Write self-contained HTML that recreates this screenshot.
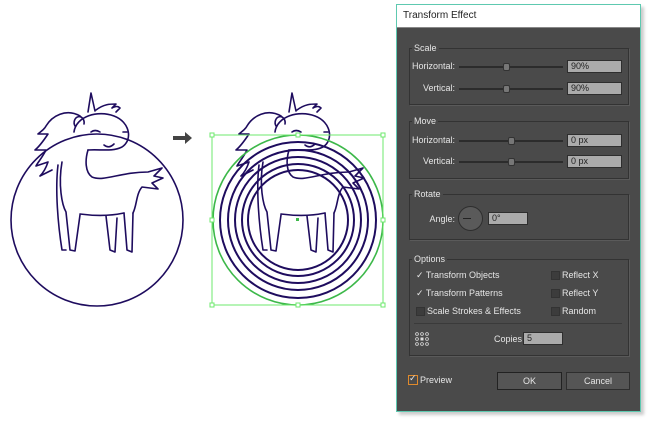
<!DOCTYPE html>
<html><head><meta charset="utf-8"><style>
body{margin:0;width:650px;height:429px;background:#fff;position:relative;overflow:hidden;font-family:"Liberation Sans",sans-serif;}
.a{position:absolute}
.dlg{left:396px;top:4px;width:243px;height:406px;border:1px solid #5ec9b0;background:#4a4a4a;box-shadow:3px 3px 3px #ccc}
.title{left:0;top:0;width:243px;height:22px;background:#fff;border-bottom:1px solid #888;font-size:10px;color:#222;line-height:22px;text-indent:6px}
.box{border:1px solid #333;box-shadow:1px 1px 0 #5a5a5a}
.lbl{font-size:9px;color:#e6e6e6;background:#4a4a4a;padding:0 2px}
.t{font-size:9px;color:#e6e6e6;white-space:nowrap}
.inp{background:#ababab;border:1px solid #2e2e2e;font-size:9px;color:#222;line-height:11px;text-indent:3px;height:11px}
.sl{height:2px;background:#2c2c2c}
.th{width:5px;height:6px;background:#777;border-radius:2px;border:1px solid #333}
.cb{width:7px;height:7px;background:#3c3c3c;border:1px solid #333}
.btn{background:#555;border:1px solid #2e2e2e;font-size:9px;color:#e6e6e6;text-align:center;line-height:16px;height:16px}
</style></head><body>
<svg class="a" style="left:0;top:0" width="400" height="429">
<defs><g id="u" fill="none" stroke="#1e0c5e" stroke-width="1.6" stroke-linecap="round" stroke-linejoin="round">
<path d="M88,112 L91,93 L95,111"/>
<path d="M74,132 C76,116 98,110 114,116 C130,122 133,140 122,147 C112,152 100,149 88,150"/>
<path d="M75,126 a5,6 0 1 1 9,-2"/>
<path d="M104,145 q5,4 10,-1"/><path d="M91,132 q4,-3 9,0"/><path d="M123,132 h4"/>
<path d="M80,116 C66,108 52,116 46,126 C44,130 40,132 38,134 L48,134 C44,140 40,146 35,150 L46,150 C42,158 38,162 36,166 L48,162 C46,168 44,172 40,176 L52,170"/>
<path d="M96,110 C104,104 110,104 116,104 L112,108 C116,106 118,106 120,108 L116,112"/>
<path d="M88,150 C85,160 85,172 92,177 C104,182 120,172 148,172 L162,168 L154,176 L163,178 L152,183 L158,189 L142,187 C136,194 137,205 133,213"/>
<path d="M62,162 C58,185 62,205 66,212 L70,250 L75,251 L80,215"/>
<path d="M80,214 C95,216 110,216 124,213"/>
<path d="M106,216 L110,250 L115,252 L117,218"/>
<path d="M124,213 L127,250 L132,252 L133,213"/>
<path d="M58,165 C55,190 58,225 62,250 L66,250"/>
</g></defs>
<use href="#u"/>
<circle cx="97" cy="220" r="86" fill="none" stroke="#1e0c5e" stroke-width="1.6"/>
<path d="M173,138 h14" stroke="#444" stroke-width="4"/><path d="M185,132 l7,6 l-7,6z" fill="#444"/>
<g transform="translate(201,0)"><use href="#u"/></g>
<g fill="none" stroke="#1e0c5e" stroke-width="2">
<circle cx="298" cy="220" r="85" stroke="#3db84a" stroke-width="1.6"/>
<circle cx="298" cy="220" r="78"/><circle cx="298" cy="220" r="70"/><circle cx="298" cy="220" r="63"/><circle cx="298" cy="220" r="56"/><circle cx="298" cy="220" r="50"/>
</g>
<rect x="212" y="135" width="171" height="170" fill="none" stroke="#6de86d" stroke-width="1"/>
<g fill="#fff" stroke="#6de86d"><rect x="210" y="133" width="4" height="4"/><rect x="296" y="133" width="4" height="4"/><rect x="381" y="133" width="4" height="4"/><rect x="210" y="218" width="4" height="4"/><rect x="381" y="218" width="4" height="4"/><rect x="210" y="303" width="4" height="4"/><rect x="296" y="303" width="4" height="4"/><rect x="381" y="303" width="4" height="4"/></g>
<rect x="296" y="218" width="3" height="3" fill="#3db84a"/>
</svg>
<div class="a dlg">
<div class="a title">Transform Effect</div>
<div class="a box" style="left:12px;top:43px;width:218px;height:55px"></div><div class="a lbl" style="left:15px;top:38px">Scale</div>
<div class="a t" style="left:0;width:58px;text-align:right;top:56px">Horizontal:</div><div class="a sl" style="left:62px;top:61px;width:104px"></div><div class="a th" style="left:106px;top:58px"></div><div class="a inp" style="left:170px;top:55px;width:53px">90%</div>
<div class="a t" style="left:0;width:58px;text-align:right;top:78px">Vertical:</div><div class="a sl" style="left:62px;top:83px;width:104px"></div><div class="a th" style="left:106px;top:80px"></div><div class="a inp" style="left:170px;top:77px;width:53px">90%</div>
<div class="a box" style="left:12px;top:116px;width:218px;height:56px"></div><div class="a lbl" style="left:15px;top:111px">Move</div>
<div class="a t" style="left:0;width:58px;text-align:right;top:130px">Horizontal:</div><div class="a sl" style="left:62px;top:135px;width:104px"></div><div class="a th" style="left:111px;top:132px"></div><div class="a inp" style="left:170px;top:129px;width:53px">0 px</div>
<div class="a t" style="left:0;width:58px;text-align:right;top:151px">Vertical:</div><div class="a sl" style="left:62px;top:156px;width:104px"></div><div class="a th" style="left:111px;top:153px"></div><div class="a inp" style="left:170px;top:150px;width:53px">0 px</div>
<div class="a box" style="left:12px;top:189px;width:218px;height:44px"></div><div class="a lbl" style="left:15px;top:184px">Rotate</div>
<div class="a t" style="left:0;width:58px;text-align:right;top:209px">Angle:</div>
<div class="a" style="left:61px;top:201px;width:23px;height:23px;border-radius:50%;background:#5a5a5a;border:1px solid #2e2e2e"></div><div class="a" style="left:66px;top:213px;width:8px;height:1px;background:#222"></div>
<div class="a inp" style="left:91px;top:207px;width:38px">0°</div>
<div class="a box" style="left:12px;top:254px;width:218px;height:95px"></div><div class="a lbl" style="left:15px;top:249px">Options</div>
<div class="a t" style="left:19px;top:265px">✓ Transform Objects</div>
<div class="a t" style="left:19px;top:283px">✓ Transform Patterns</div>
<div class="a cb" style="left:19px;top:302px"></div><div class="a t" style="left:30px;top:301px">Scale Strokes &amp; Effects</div>
<div class="a cb" style="left:154px;top:266px"></div><div class="a t" style="left:165px;top:265px">Reflect X</div>
<div class="a cb" style="left:154px;top:284px"></div><div class="a t" style="left:165px;top:283px">Reflect Y</div>
<div class="a cb" style="left:154px;top:302px"></div><div class="a t" style="left:165px;top:301px">Random</div>
<div class="a" style="left:17px;top:318px;width:208px;height:1px;background:#3a3a3a"></div>
<svg class="a" style="left:18px;top:327px" width="14" height="14"><g fill="none" stroke="#ddd" stroke-width="0.8"><circle cx="2" cy="2" r="1.4"/><circle cx="7" cy="2" r="1.4"/><circle cx="12" cy="2" r="1.4"/><circle cx="2" cy="7" r="1.4"/><circle cx="12" cy="7" r="1.4"/><circle cx="2" cy="12" r="1.4"/><circle cx="7" cy="12" r="1.4"/><circle cx="12" cy="12" r="1.4"/></g><rect x="5.5" y="5.5" width="3" height="3" fill="#ddd"/></svg>
<div class="a t" style="left:97px;top:329px">Copies</div><div class="a inp" style="left:126px;top:327px;width:38px">5</div>
<div class="a" style="left:11px;top:370px;width:8px;height:8px;border:1px solid #e08a2c"></div><div class="a t" style="left:12px;top:368px">✓</div><div class="a t" style="left:23px;top:370px">Preview</div>
<div class="a btn" style="left:100px;top:367px;width:63px;border-color:#222">OK</div>
<div class="a btn" style="left:169px;top:367px;width:62px">Cancel</div>
</div>
</body></html>
